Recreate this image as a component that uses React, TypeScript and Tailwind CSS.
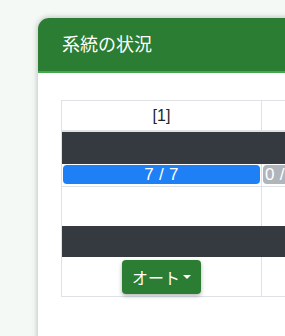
import React from "react";

export default function App() {
  const font = { fontFamily: '"Liberation Sans", "Noto Sans CJK JP", sans-serif' };
  return (
    <div
      className="w-[285px] h-[336px] overflow-hidden bg-[#f5f9f5] pt-[18px] pl-[38px]"
      style={font}
    >
      <div className="w-[400px] h-[330px] bg-white rounded-[11px] shadow-[0_0_6px_rgba(0,0,0,0.28)] overflow-hidden">
        <div className="h-[55px] bg-[#2a7d32] border-b-2 border-[#45a84c] flex items-center pl-[24px] pb-[3px]">
          <span className="text-white text-[18px] leading-none" style={{ fontFamily: '"Noto Sans CJK JP", sans-serif' }}>
            系統の状況
          </span>
        </div>
        <div className="pl-[23px] pt-[27px]">
          <div className="w-[400px] border-l border-t border-[#dee2e6] text-[16px] text-[#212529]">
            <div className="flex h-[31px] border-b-2 border-[#dee2e6]">
              <div className="w-[200px] border-r border-[#dee2e6] flex items-center justify-center">[1]</div>
              <div className="flex-1" />
            </div>
            <div className="h-[32px] bg-[#343a40]" />
            <div className="flex h-[23px] border-b border-[#dee2e6]">
              <div className="w-[200px] border-r border-[#dee2e6] pl-px pr-px pt-px">
                <div className="h-[19px] bg-[#1f7ff5] rounded-[4px] text-white text-[17px] leading-[19px] text-center tracking-[0.3px]">
                  7 / 7
                </div>
              </div>
              <div className="flex-1 pl-px pt-px">
                <div className="h-[19px] bg-[#b0b5bb] rounded-[4px] text-white text-[17px] leading-[19px] pl-[2px] tracking-[0.3px]">
                  0 / 7
                </div>
              </div>
            </div>
            <div className="flex h-[39px]">
              <div className="w-[200px] border-r border-[#dee2e6]" />
              <div className="flex-1" />
            </div>
            <div className="h-[31px] bg-[#343a40]" />
            <div className="flex h-[40px] border-b border-[#dee2e6]">
              <div className="w-[200px] border-r border-[#dee2e6] flex justify-center pt-[3px]">
                <button
                  className="h-[34px] w-[79px] bg-[#2a7d32] rounded-[4px] shadow-[0_2px_4px_rgba(0,0,0,0.3)] text-white text-[16px] flex items-center pl-[10px]"
                  style={{ fontFamily: '"Noto Sans CJK JP", sans-serif' }}
                >
                  オート
                  <span className="ml-[3px] w-0 h-0 border-l-[4px] border-r-[4px] border-t-[4px] border-l-transparent border-r-transparent border-t-white" />
                </button>
              </div>
              <div className="flex-1" />
            </div>
          </div>
        </div>
      </div>
    </div>
  );
}
